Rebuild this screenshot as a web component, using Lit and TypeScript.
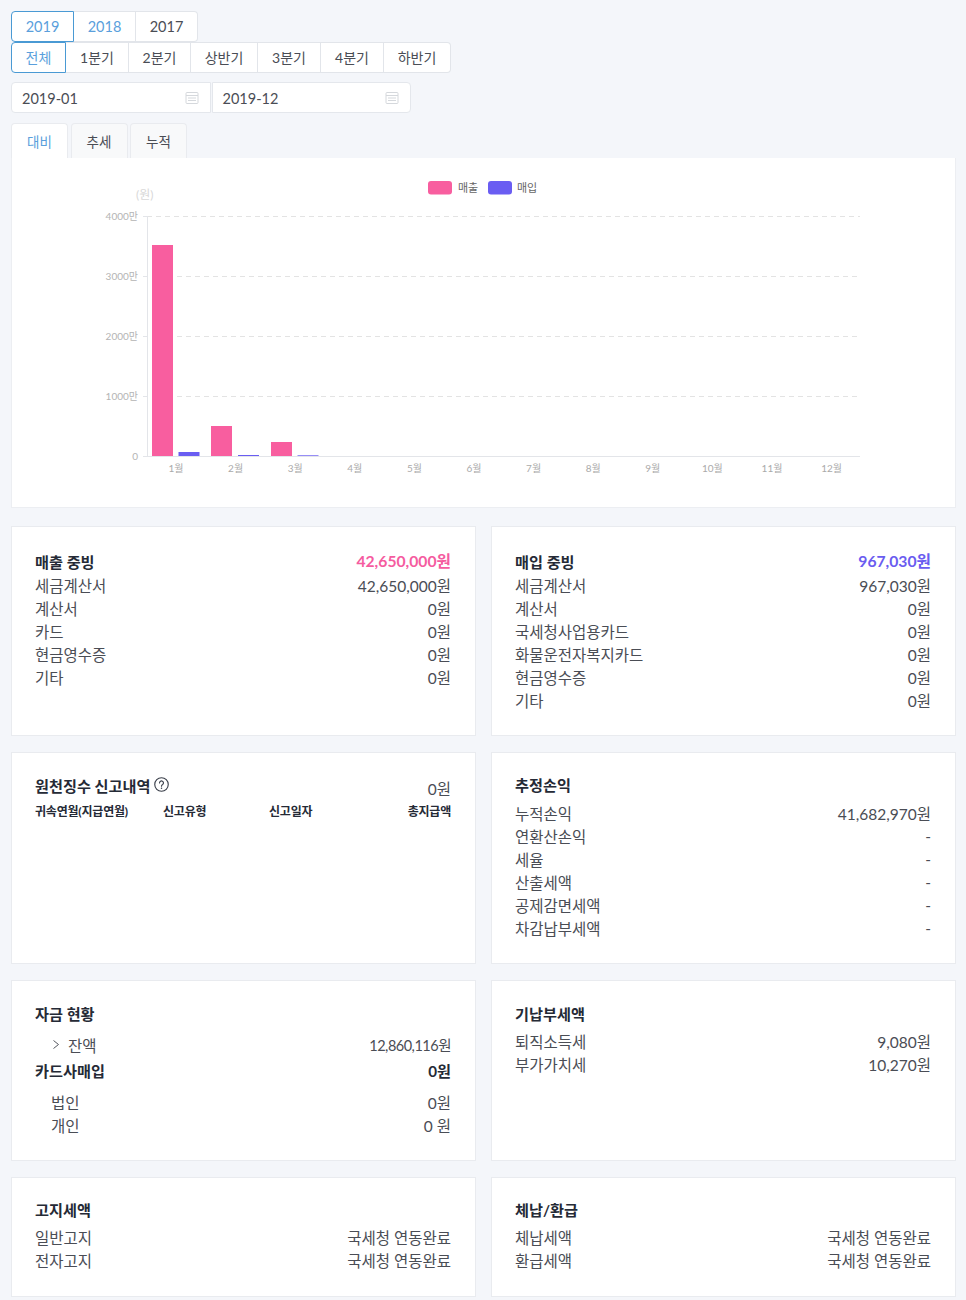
import { LitElement, html, css, svg } from "lit";
import { customElement } from "lit/decorators.js";

const FONT = `Lato, "Noto Sans CJK KR", sans-serif`;

type Row = [string, string];

const calendar = html`<svg class="cal" viewBox="0 0 14 14" width="14" height="14" fill="none" stroke="#d5d8dc" stroke-width="1">
  <rect x="1" y="1.5" width="12" height="11" rx="1"></rect>
  <path d="M1 4.5h12M3 7h8M3 9.5h8" ></path>
</svg>`;

const help = html`<svg class="help" viewBox="0 0 16 16" width="15" height="15" fill="none" stroke="#3a3f4a" stroke-width="1.2">
  <circle cx="8" cy="8" r="7.2"></circle>
  <path d="M5.9 6.3a2.1 2.1 0 1 1 3.3 1.7c-.8.5-1.2.9-1.2 1.9" stroke-linecap="round"></path>
  <circle cx="8" cy="11.9" r=".8" fill="#3a3f4a" stroke="none"></circle>
</svg>`;

const chevron = html`<svg class="chev" viewBox="0 0 6 9" width="6" height="9" fill="none" stroke="#55585f" stroke-width="1">
  <path d="M.5.5 5.5 4.5.5 8.5"></path>
</svg>`;

@customElement("app-root")
export class AppRoot extends LitElement {
  static styles = css`
    :host {
      display: block;
      width: 966px;
      height: 1300px;
      overflow: hidden;
      box-sizing: border-box;
      padding: 11px 10px 0 11px;
      background: #f4f6fa;
      font-family: ${css([FONT] as unknown as TemplateStringsArray)};
      font-size: 15px;
      color: #4a4d55;
    }
    * { box-sizing: border-box; }
    .seg { display: flex; }
    .seg button {
      font: inherit;
      font-size: 14.5px;
      height: 31px;
      padding: 0;
      background: #fff;
      color: #4a4d55;
      border: 1px solid #e2e5ea;
      border-left-width: 0;
      display: flex;
      align-items: center;
      justify-content: center;
    }
    .seg.small button { font-size: 14px; padding-bottom: 2px; }
    .seg button:first-child { border-left-width: 1px; border-radius: 4px 0 0 4px; }
    .seg button:last-child { border-radius: 0 4px 4px 0; }
    .seg button.blue { color: #5a9fdc; }
    .seg button.on { border: 1px solid #4a9ad4; color: #5a9fdc; }
    .dates { display: flex; gap: 1px; margin-top: 9px; width: 400px; }
    .date {
      flex: 1;
      height: 31px;
      background: #fff;
      border: 1px solid #e4e7ec;
      display: flex;
      align-items: center;
      justify-content: space-between;
      padding: 2px 11px 0 10px;
      font-size: 14.5px;
    }
    .date .cal { margin-top: -2px; }
    .date:first-child { border-radius: 4px 0 0 4px; }
    .date:last-child { border-radius: 0 4px 4px 0; }
    .tabs { display: flex; gap: 2.5px; margin-top: 10px; }
    .tab {
      width: 57px;
      height: 35px;
      background: #f8f9fa;
      border: 1px solid #e9ebef;
      border-bottom: 0;
      border-radius: 4px 4px 0 0;
      display: flex;
      align-items: center;
      justify-content: center;
      font-size: 13.5px;
    }
    .tab.on { background: #fff; color: #5a9fdc; }
    .chart {
      background: #fff;
      height: 350px;
      border: 1px solid #eceef2;
      border-top: 0;
    }
    .chart svg { display: block; }
    .grid {
      display: grid;
      grid-template-columns: 465px 465px;
      column-gap: 15px;
      margin-top: 18px;
      row-gap: 16px;
    }
    .card {
      background: #fff;
      border: 1px solid #e9ebef;
      padding: 22px 24px 0 23px;
      font-size: 15.5px;
    }
    .r1 { height: 210px; }
    .r2 { height: 212px; }
    .r3 { height: 181px; }
    .r4 { height: 120px; }
    .row {
      display: flex;
      justify-content: space-between;
      align-items: center;
      height: 23px;
      white-space: nowrap;
    }
    .title { font-weight: 700; color: #252a36; font-size: 15.2px; }
    .pink { color: #f55c9f; font-weight: 700; font-size: 15.7px; }
    .violet { color: #6a5cf0; font-weight: 700; font-size: 15.7px; }
    .ind { padding-left: 16px; }
    .tight { letter-spacing: -0.5px; font-size: 14.5px; }
    .head {
      display: grid;
      grid-template-columns: 128px 106px 1fr auto;
      font-size: 12px;
      font-weight: 700;
      color: #252a36;
      margin-top: 2px;
      height: 20px;
      align-items: center;
      letter-spacing: -0.2px;
    }
    .help { margin-left: 4px; }
    .with-icon { display: flex; align-items: center; margin-bottom: 4px; }
    .low { margin-top: 2px; }
    .mb1 { margin-bottom: 1px; }
    .h18 { height: 18px; }
    .h19 { height: 19px; }
    .h20 { height: 20px; }
    .s8 { margin-top: 8px; }
    .s6 { margin-top: 6px; }
    .s7 { margin-top: 7px; }
    .s11 { margin-top: 11px; }
    .s2 { margin-top: 2px; }
    .s9 { margin-top: 9px; }
    .chev { margin: 0 9px 0 18px; }
    .lab { display: flex; align-items: center; }
    svg text { font-family: ${css([FONT] as unknown as TemplateStringsArray)}; }
  `;

  private rows(rows: Row[]) {
    return rows.map(([a, b]) => html`<div class="row"><span>${a}</span><span>${b}</span></div>`);
  }

  private chart() {
    const gridY: [number, string][] = [
      [216, "4000만"],
      [276, "3000만"],
      [336, "2000만"],
      [396, "1000만"],
      [456, "0"],
    ];
    const bars: [number, number, string][] = [
      [152, 245, "#f85e9f"],
      [178.5, 452, "#6a5df2"],
      [211, 426, "#f85e9f"],
      [238, 455, "#6a5df2"],
      [271, 442, "#f85e9f"],
      [297.5, 455.3, "#6a5df2"],
    ];
    const months = Array.from({ length: 12 }, (_, i) => i + 1);
    return html`<svg width="942" height="349" viewBox="12 158 942 349">
      ${gridY.map(([y, t], i) => svg`
        ${i < 4
          ? svg`<line x1=${i === 0 ? 147 : 177} x2="860" y1=${y + 0.5} y2=${y + 0.5} stroke="#e3e3e3" stroke-dasharray="5 4"></line>`
          : svg`<line x1="143" x2="860" y1="456.5" y2="456.5" stroke="#e3e5e9"></line>`}
        <line x1="143" x2="147" y1=${y + 0.5} y2=${y + 0.5} stroke="#e3e5e9"></line>
        <text x="138" y=${y + 4} text-anchor="end" font-size="10" fill="#b4b4b4">${t}</text>
      `)}
      <line x1="147.5" x2="147.5" y1="216" y2="456" stroke="#e3e5e9"></line>
      ${bars.map(([x, y, c]) => svg`<rect x=${x} y=${y} width="21" height=${456 - y} fill=${c}></rect>`)}
      ${months.map((m) => svg`<text x=${176 + (m - 1) * 59.6} y="472" text-anchor="middle" font-size="10" fill="#aaa">${m}월</text>`)}
      <text x="136" y="199" font-size="12" fill="#d8d8d8">(원)</text>
      <rect x="428" y="181" width="24" height="13.5" rx="3" fill="#f85e9f"></rect>
      <text x="458" y="192" font-size="11" fill="#666">매출</text>
      <rect x="488" y="181" width="24" height="13.5" rx="3" fill="#6a5df2"></rect>
      <text x="517" y="192" font-size="11" fill="#666">매입</text>
    </svg>`;
  }

  render() {
    const years: [string, number, string][] = [["2019", 63, "on"], ["2018", 62, "blue"], ["2017", 62, ""]];
    const periods: [string, number, string][] = [
      ["전체", 55, "on"], ["1분기", 63, ""], ["2분기", 62, ""], ["상반기", 67, ""],
      ["3분기", 63, ""], ["4분기", 63, ""], ["하반기", 67, ""],
    ];
    const w = (n: number) => `width:${n}px`;
    return html`
      <div class="seg">
        ${years.map(([t, n, c]) => html`<button class=${c} style=${w(n)}>${t}</button>`)}
      </div>
      <div class="seg small">
        ${periods.map(([t, n, c]) => html`<button class=${c} style=${w(n)}>${t}</button>`)}
      </div>
      <div class="dates">
        <div class="date"><span>2019-01</span>${calendar}</div>
        <div class="date"><span>2019-12</span>${calendar}</div>
      </div>
      <div class="tabs">
        <div class="tab on">대비</div><div class="tab">추세</div><div class="tab">누적</div>
      </div>
      <div class="chart">${this.chart()}</div>
      <div class="grid">
        <section class="card r1">
          <div class="row mb1"><span class="title">매출 중빙</span><span class="pink">42,650,000원</span></div>
          ${this.rows([["세금계산서", "42,650,000원"], ["계산서", "0원"], ["카드", "0원"], ["현금영수증", "0원"], ["기타", "0원"]])}
        </section>
        <section class="card r1">
          <div class="row mb1"><span class="title">매입 중빙</span><span class="violet">967,030원</span></div>
          ${this.rows([["세금계산서", "967,030원"], ["계산서", "0원"], ["국세청사업용카드", "0원"], ["화물운전자복지카드", "0원"], ["현금영수증", "0원"], ["기타", "0원"]])}
        </section>
        <section class="card r2">
          <div class="row"><span class="title with-icon">원천징수 신고내역${help}</span><span class="low">0원</span></div>
          <div class="head"><span>귀속연월(지급연월)</span><span>신고유형</span><span>신고일자</span><span>총지급액</span></div>
        </section>
        <section class="card r2">
          <div class="row h18"><span class="title">추정손익</span></div>
          <div class="s8"></div>
          ${this.rows([["누적손익", "41,682,970원"], ["연환산손익", "-"], ["세율", "-"], ["산출세액", "-"], ["공제감면세액", "-"], ["차감납부세액", "-"]])}
        </section>
        <section class="card r3">
          <div class="row h19"><span class="title">자금 현황</span></div>
          <div class="row s11"><span class="lab">${chevron}잔액</span><span class="tight">12,860,116원</span></div>
          <div class="row s2"><span class="title">카드사매입</span><span class="title">0원</span></div>
          <div class="row ind s9"><span>법인</span><span>0원</span></div>
          <div class="row ind"><span>개인</span><span>0 원</span></div>
        </section>
        <section class="card r3">
          <div class="row h20"><span class="title">기납부세액</span></div>
          <div class="s6"></div>
          ${this.rows([["퇴직소득세", "9,080원"], ["부가가치세", "10,270원"]])}
        </section>
        <section class="card r4">
          <div class="row h18"><span class="title">고지세액</span></div>
          <div class="s7"></div>
          ${this.rows([["일반고지", "국세청 연동완료"], ["전자고지", "국세청 연동완료"]])}
        </section>
        <section class="card r4">
          <div class="row h18"><span class="title">체납/환급</span></div>
          <div class="s7"></div>
          ${this.rows([["체납세액", "국세청 연동완료"], ["환급세액", "국세청 연동완료"]])}
        </section>
      </div>
    `;
  }
}
